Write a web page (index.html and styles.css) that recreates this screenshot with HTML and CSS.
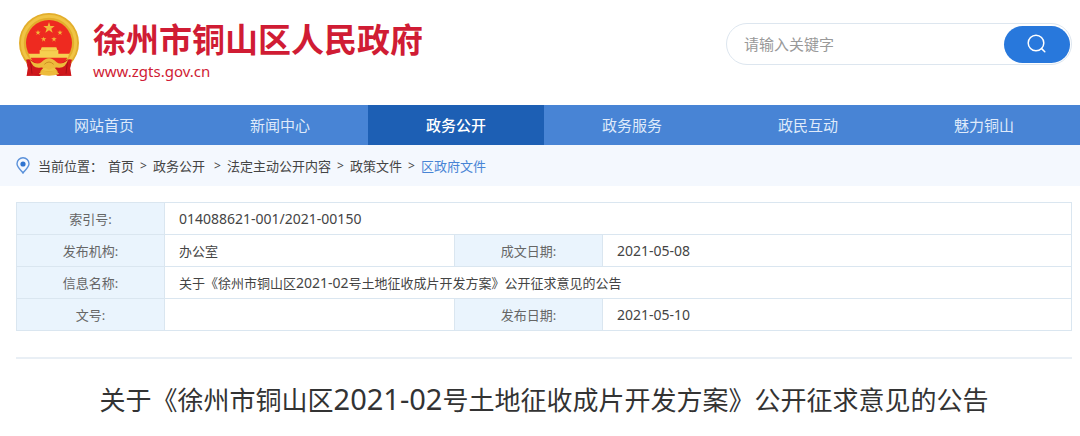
FILE: index.html
```
<!DOCTYPE html>
<html lang="zh-CN">
<head>
    <meta charset="UTF-8">
    <meta name="viewport" content="width=device-width, initial-scale=1.0">
    <title>徐州市铜山区人民政府</title>
    <link rel="stylesheet" href="styles.css">
</head>
<body>

<!-- Header -->
<header class="header">
    <a class="logo" href="#">
        <svg class="emblem" viewBox="24 24 186 192" aria-hidden="true">
            <path d="M47 164 L54 190 L50 212 L90 213 L102 202 L130 202 L142 213 L184 212 L180 190 L187 164 Z" fill="#c9151b"/>
            <circle cx="117" cy="114" r="90" fill="#e3ae2c"/>
            <circle cx="117" cy="114" r="80" fill="none" stroke="#f0c445" stroke-width="9"/>
            <circle cx="117" cy="114" r="69" fill="#ee2a20"/>
            <path d="M117 51 L121 63 L134 63 L124 71 L128 83 L117 76 L106 83 L110 71 L100 63 L113 63 Z" fill="#f2b93a"/>
            <path id="star" d="M84 75 L86 80 L92 80 L87 84 L89 90 L84 86 L79 90 L81 84 L76 80 L82 80 Z" fill="#f2b93a"/>
            <use href="#star" x="66"/>
            <use href="#star" x="17" y="20"/>
            <use href="#star" x="48" y="20"/>
            <path d="M95 127 H139 L142 135 H145 V146 H178 L173 160 H61 L56 146 H89 V135 H92 Z" fill="#f6d050"/>
            <path d="M92 137 H142" stroke="#e8b53a" stroke-width="2"/>
            <path d="M62 158 H172 L160 178 H74 Z" fill="#ee2a20"/>
            <path d="M48 164 Q60 160 72 170 L100 188 L84 206 Q68 212 50 212 Q58 188 48 164 Z" fill="#cf171b"/>
            <path d="M186 164 Q174 160 162 170 L134 188 L150 206 Q166 212 184 212 Q176 188 186 164 Z" fill="#cf171b"/>
            <path d="M62 172 L66 206 M172 172 L168 206" stroke="#a80f16" stroke-width="3"/>
            <path d="M60 164 Q80 182 94 172 Q106 160 117 160 Q128 160 140 172 Q154 182 174 164 Q166 190 146 188 Q130 186 117 194 Q104 186 88 188 Q68 190 60 164 Z" fill="#edbb3b"/>
            <path d="M103 178 Q117 164 131 178" fill="none" stroke="#cc8f22" stroke-width="3"/>
            <path d="M86 207 L98 196 Q117 204 136 196 L148 207 Q117 218 86 207 Z" fill="#edbb3b"/>
        </svg>
        <span class="logo-text">
            <span class="site-name">徐州市铜山区人民政府</span>
            <span class="site-url">www.zgts.gov.cn</span>
        </span>
    </a>
    <form class="search">
        <input class="search-input" type="text" placeholder="请输入关键字" aria-label="请输入关键字">
        <button class="search-button" type="button" aria-label="搜索">
            <svg width="20" height="20" viewBox="0 0 20 20" aria-hidden="true">
                <circle cx="9" cy="9" r="7.8"/>
                <path d="M14.6 14.6 L17.8 17.8"/>
            </svg>
        </button>
    </form>
</header>

<!-- Navigation -->
<nav class="nav">
    <a href="#">网站首页</a>
    <a href="#">新闻中心</a>
    <a class="active" href="#">政务公开</a>
    <a href="#">政务服务</a>
    <a href="#">政民互动</a>
    <a href="#">魅力铜山</a>
</nav>

<!-- Current location -->
<div class="location">
    <svg class="pin" width="14" height="17" viewBox="0 0 14 17" aria-hidden="true">
        <path d="M7 16 C5.5 13.8 1 10.5 1 6.8 A6 6 0 0 1 13 6.8 C13 10.5 8.5 13.8 7 16 Z" fill="none" stroke="#5a91da" stroke-width="1.4"/>
        <circle cx="7" cy="7" r="2.6" fill="#2f74d0"/>
    </svg>
    <span class="location-label">当前位置：</span>
    <a href="#">首页</a>
    <span class="sep">&gt;</span>
    <a class="section" href="#">政务公开</a>
    <span class="sep">&gt;</span>
    <a href="#">法定主动公开内容</a>
    <span class="sep">&gt;</span>
    <a href="#">政策文件</a>
    <span class="sep">&gt;</span>
    <a class="current" href="#">区政府文件</a>
</div>

<main class="content">
    <!-- Document info -->
    <table class="info">
        <colgroup>
            <col class="col-label">
            <col class="col-value">
            <col class="col-label">
            <col>
        </colgroup>
        <tr>
            <th scope="row">索引号:</th>
            <td colspan="3"><span class="num">014088621-001/2021-00150</span></td>
        </tr>
        <tr>
            <th scope="row">发布机构:</th>
            <td>办公室</td>
            <th scope="row">成文日期:</th>
            <td><span class="num">2021-05-08</span></td>
        </tr>
        <tr>
            <th scope="row">信息名称:</th>
            <td colspan="3">关于《徐州市铜山区<span class="num">2021-02</span>号土地征收成片开发方案》公开征求意见的公告</td>
        </tr>
        <tr>
            <th scope="row">文号:</th>
            <td></td>
            <th scope="row">发布日期:</th>
            <td><span class="num">2021-05-10</span></td>
        </tr>
    </table>

    <h1 class="title">关于《徐州市铜山区<span class="title-num">2021-02</span>号土地征收成片开发方案》公开征求意见的公告</h1>
</main>

</body>
</html>
```
FILE: styles.css
```
* {
    box-sizing: border-box;
}

body {
    margin: 0;
    font-family: "Noto Sans", "Noto Sans CJK SC", sans-serif;
    font-size: 13px;
    color: #444;
    background-color: #fff;
}

a {
    color: inherit;
    text-decoration: none;
}

/* Header */
.header {
    display: flex;
    justify-content: space-between;
    align-items: flex-start;
    height: 105px;
    padding: 13px 8px 0 18px;
}

.logo {
    display: flex;
    gap: 13px;
    color: #d01c34;
}

.emblem {
    width: 62px;
    height: 64px;
}

.logo-text {
    display: flex;
    flex-direction: column;
    padding-top: 6px;
}

.site-name {
    font-size: 33px;
    font-weight: bold;
    line-height: 42px;
}

.site-url {
    font-size: 15px;
    line-height: 20px;
}

.search {
    display: flex;
    align-items: center;
    width: 346px;
    height: 42px;
    margin-top: 10px;
    padding: 0 1px 0 17px;
    border: 1px solid #dde6ef;
    border-radius: 21px;
}

.search-input {
    flex: 1;
    min-width: 0;
    padding: 0;
    border: none;
    outline: none;
    font-family: inherit;
    font-size: 15px;
    background: none;
}

.search-input::placeholder {
    color: #999;
}

.search-button {
    display: flex;
    justify-content: center;
    align-items: center;
    width: 66px;
    height: 37px;
    padding: 0;
    border: none;
    border-radius: 19px;
    background-color: #2878dc;
    cursor: pointer;
}

.search-button svg {
    fill: none;
    stroke: #fff;
    stroke-width: 1.5;
    stroke-linecap: round;
}

/* Navigation */
.nav {
    display: grid;
    grid-template-columns: repeat(6, 1fr);
    padding: 0 8px 0 16px;
    background-color: #4884d5;
}

.nav a {
    font-size: 15px;
    line-height: 40px;
    text-align: center;
    color: #dfeafa;
}

.nav .active {
    color: #fff;
    font-weight: 500;
    background-color: #1d5fb4;
}

/* Current location */
.location {
    display: flex;
    align-items: center;
    gap: 6px;
    height: 41px;
    padding: 0 16px 1px;
    background-color: #f4f8fe;
}

.location-label {
    margin: 0 -1px 0 2px;
}

.sep {
    width: 7px;
    font-size: 12px;
}

.section {
    margin-right: 3px;
}

.current {
    color: #4884d5;
}

/* Document info */
.content {
    padding: 16px 8px 0 16px;
}

.info {
    width: 100%;
    table-layout: fixed;
    border-collapse: collapse;
}

.col-label {
    width: 148px;
}

.col-value {
    width: 290px;
}

.info th,
.info td {
    height: 32px;
    padding: 0 14px;
    border: 1px solid #dae6f0;
    line-height: 20px;
    text-align: left;
}

.info th {
    font-weight: normal;
    text-align: center;
    color: #666;
    background-color: #eaf4fd;
}

.num {
    font-size: 14px;
}

/* Article title */
.title {
    margin: 26px 0 0;
    padding-top: 18px;
    border-top: 2px solid #e9eff5;
    font-size: 26px;
    font-weight: normal;
    line-height: 44px;
    text-align: center;
    color: #333;
}

.title-num {
    font-size: 29px;
}
```
